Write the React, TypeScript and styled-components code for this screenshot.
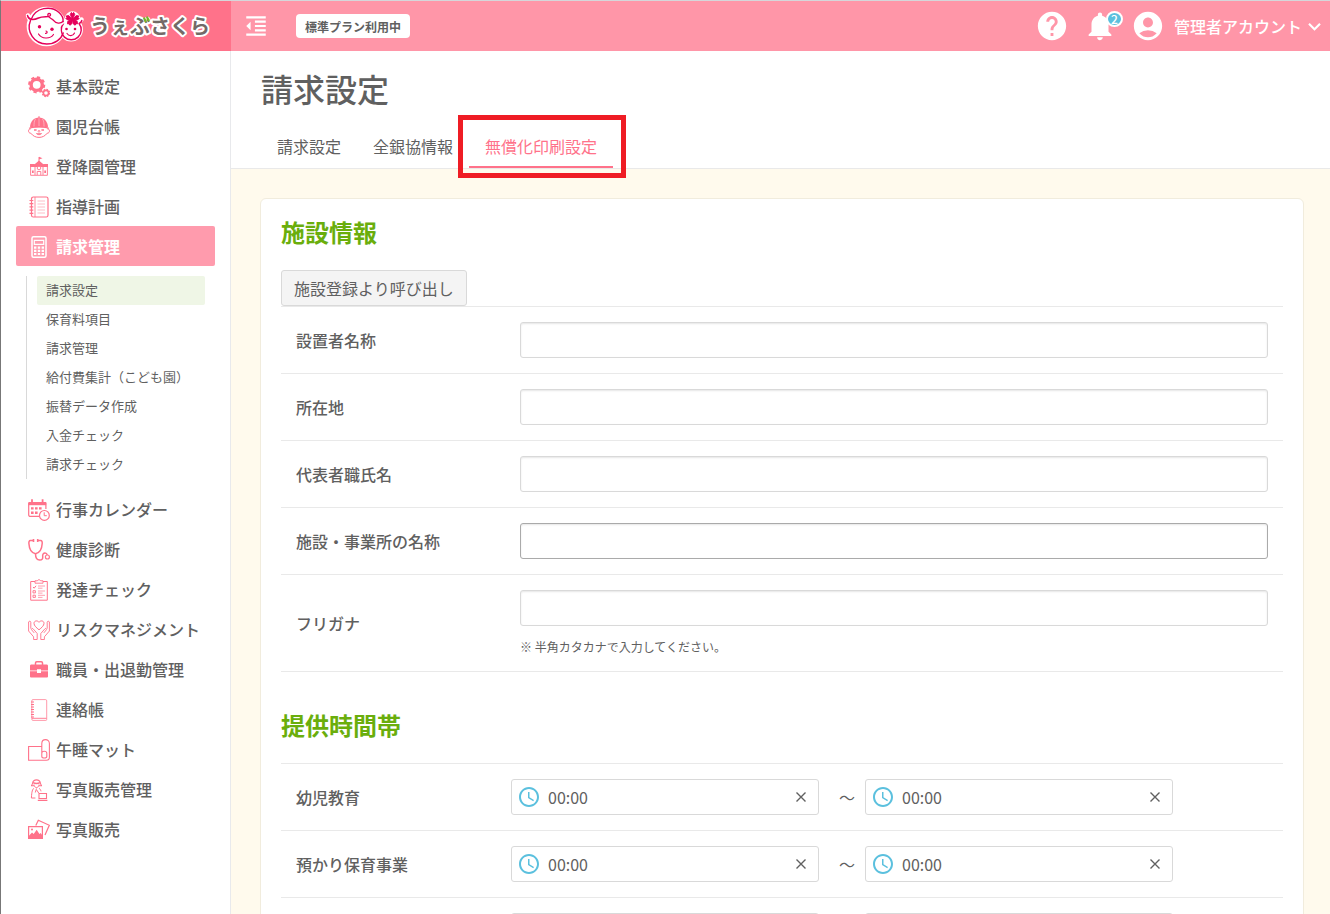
import React from "react";
import styled, { createGlobalStyle, css } from "styled-components";
import {
  MdAccessTime,
  MdAccountCircle,
  MdFormatIndentDecrease,
  MdHelp,
  MdKeyboardArrowDown,
  MdNotifications,
} from "react-icons/md";

const color = {
  brand: "#ff728a",
  bar: "#ff96a8",
  active: "#ff9bad",
  text: "#606060",
  green: "#6aae0c",
  line: "#e9e9e9",
  cream: "#fffaed",
  blue: "#5bc0de",
};

const GlobalStyle = createGlobalStyle`
  *, *::before, *::after { box-sizing: border-box; }
  body {
    margin: 0;
    background: #fff;
    color: ${color.text};
    font-family: "Noto Sans CJK JP", sans-serif;
    font-size: 16px;
    line-height: 24px;
  }
  button, input { font: inherit; color: inherit; }
  a { color: inherit; text-decoration: none; }
  h1, h2, ul { margin: 0; padding: 0; }
  ul { list-style: none; }
`;

const Page = styled.div`
  display: grid;
  grid-template: 50px minmax(0, 1fr) / 230px minmax(0, 1fr);
  height: 100vh;
  overflow: hidden;
  border-top: 1px solid #d6d6da;
  border-left: 1px solid #777;
`;

const Brand = styled.a`
  display: block;
  height: 50px;
  background: ${color.brand};
`;

const TopBar = styled.header`
  display: flex;
  align-items: center;
  justify-content: space-between;
  padding: 0 3px 0 12px;
  background: ${color.bar};
  color: #fff;
`;

const BarGroup = styled.div<{ $gap: number }>`
  display: flex;
  align-items: center;
  gap: ${(p) => p.$gap}px;
`;

const BarButton = styled.button`
  display: flex;
  align-items: center;
  position: relative;
  padding: 0;
  border: 0;
  background: none;
  color: #fff;
  font-weight: 500;
  cursor: pointer;
`;

const AccountName = styled.span`
  padding-left: 9px;
`;

const PlanTag = styled.span`
  padding: 2px 9px 0;
  border-radius: 4px;
  background: #fff;
  color: ${color.text};
  font-size: 12px;
  font-weight: 700;
  line-height: 22px;
`;

const Count = styled.span`
  position: absolute;
  top: 2px;
  right: -6px;
  width: 17px;
  height: 16px;
  border: 2px solid #fff;
  border-radius: 50%;
  background: ${color.blue};
  font-size: 12px;
  line-height: 11px;
  text-align: center;
`;

const Sidebar = styled.nav`
  padding: 15px;
  border-right: 1px solid #e8e9ec;
  background: #fff;
  overflow: hidden;
`;

const NavLink = styled.a<{ $active?: boolean }>`
  display: flex;
  align-items: center;
  gap: 6px;
  height: 40px;
  padding-left: 12px;
  border-radius: 2px;
  font-weight: 500;
  white-space: nowrap;
  svg { flex: none; color: ${color.brand}; }
  ${(p) =>
    p.$active &&
    css`
      background: ${color.active};
      color: #fff;
      font-weight: 700;
      svg { color: #fff; }
    `}
`;

const SubMenu = styled.ul`
  margin: 10px;
  padding-left: 10px;
  border-left: 1px solid #d9d9d9;
`;

const SubLink = styled.a<{ $active?: boolean }>`
  display: block;
  padding: 0 0 2px 9px;
  border-radius: 2px;
  background: ${(p) => (p.$active ? "#eff6e6" : "transparent")};
  font-size: 13px;
  line-height: 27px;
  white-space: nowrap;
`;

const Main = styled.main`
  display: flex;
  flex-direction: column;
  overflow: auto;
  scrollbar-width: none;
  background: ${color.cream};
`;

const PageHead = styled.div`
  padding: 17px 30px 0;
  border-bottom: 1px solid ${color.line};
  background: #fff;
`;

const Title = styled.h1`
  margin-bottom: 18px;
  font-size: 32px;
  font-weight: 500;
  line-height: 40px;
`;

const Tabs = styled.div`
  display: flex;
`;

const Tab = styled.a<{ $active?: boolean }>`
  position: relative;
  padding: 8px 16px;
  border-bottom: 2px solid ${(p) => (p.$active ? color.brand : "transparent")};
  color: ${(p) => (p.$active ? color.brand : "inherit")};
`;

const Highlight = styled.span`
  position: absolute;
  inset: -11px -13px -12px -11px;
  border: 5px solid #ef1c24;
  pointer-events: none;
`;

const Card = styled.form`
  margin: 29px 26px 29px 29px;
  padding: 19px 20px;
  border: 1px solid #f1ecdd;
  border-radius: 6px;
  background: #fff;
`;

const Section = styled.section`
  & + & { margin-top: 39px; }
`;

const SectionTitle = styled.h2`
  margin-bottom: 24px;
  color: ${color.green};
  font-size: 24px;
  font-weight: 700;
  line-height: 28px;
`;

const RecallButton = styled.button`
  display: block;
  height: 36px;
  padding: 0 12px;
  border: 1px solid #d9d9d9;
  border-radius: 3px;
  background: #f4f4f4;
`;

const Rows = styled.div`
  border-bottom: 1px solid ${color.line};
`;

const Row = styled.div<{ $label: number }>`
  display: grid;
  grid-template-columns: ${(p) => p.$label}px minmax(0, 1fr);
  align-items: center;
  padding: 15px;
  border-top: 1px solid ${color.line};
`;

const Label = styled.label`
  font-weight: 500;
`;

const TextInput = styled.input<{ $strong?: boolean }>`
  display: block;
  width: 100%;
  height: 36px;
  padding: 0 12px;
  border: 1px solid ${(p) => (p.$strong ? "#aaa" : "#d9d9d9")};
  border-radius: 3px;
  box-shadow: inset 0 1px 2px rgba(0, 0, 0, 0.1);
  outline: 0;
`;

const Hint = styled.p`
  margin: 12px 0 0;
  font-size: 12px;
  line-height: 18px;
`;

const TimeRange = styled.div`
  display: flex;
  align-items: center;
`;

const Tilde = styled.span`
  padding: 0 10px 0 20px;
`;

const TimeBox = styled.div`
  display: flex;
  align-items: center;
  flex: 0 1 308px;
  height: 36px;
  padding: 0 12px 0 5px;
  border: 1px solid #d9d9d9;
  border-radius: 3px;
  svg { flex: none; }
`;

const TimeInput = styled.input`
  flex: 1;
  min-width: 0;
  height: 24px;
  padding: 0 0 0 7px;
  border: 0;
  outline: 0;
  background: none;
`;

const ClearButton = styled.button`
  display: flex;
  padding: 0;
  border: 0;
  background: none;
`;

const Icon = ({ children }: { children: React.ReactNode }) => (
  <svg width="22" height="24" viewBox="0 -2 22 24" fill="none" stroke="currentColor" strokeWidth="1.2" aria-hidden="true">
    {children}
  </svg>
);

const icons = {
  gears: (
    <Icon>
      <circle cx="8.7" cy="8.8" r="5.6" strokeWidth="3.4" />
      <circle cx="8.7" cy="8.8" r="7.6" strokeWidth="2" strokeDasharray="3.2 2.77" />
      <circle cx="18" cy="17" r="2.6" strokeWidth="1.6" />
      <circle cx="18" cy="17" r="3.6" strokeWidth="1.2" strokeDasharray="1.6 1.23" />
    </Icon>
  ),
  child: (
    <Icon>
      <path d="M2 11.5C2 5.5 6 1.5 11 1.5s9 4 9 10z" fill="currentColor" stroke="none" />
      <path d="M11 2v9M7.500 3C6 5 6 8 6 11M14.500 3C16 5 16 8 16 11" stroke="#fff" strokeWidth=".5" opacity=".8" />
      <path d="M11 .3v2M1 12.2c6-2 14-2 20 0" />
      <path d="M2.800 12.800c-3-.4-3 4.600 0 4.400C5 20.200 8 21.400 11 21.400s6-1.200 8.200-4.200c3 .2 3-4.800 0-4.400" strokeWidth="1" />
      <path d="M6 14h2.600M13.400 14H16" strokeWidth="1.500" />
      <circle cx="11" cy="15.300" r=".9" strokeWidth=".8" />
      <path d="M8.300 17.500c1.200 1.700 4.200 1.700 5.400 0z" fill="currentColor" strokeWidth=".6" />
    </Icon>
  ),
  school: (
    <Icon>
      <path d="M11 1v5" strokeWidth="1" />
      <path d="M11 .8l3.500 1.400L11 3.600zM11 4.500l5.500 4.700V11h-11V9.200z" fill="currentColor" stroke="none" />
      <path d="M2 8h5l-1 3H2zM15 8h5v3h-4z" fill="currentColor" stroke="none" />
      <path d="M2.600 11v8.300h16.800V11M7 11v8M15 11v8" strokeWidth=".9" />
      <circle cx="11" cy="12" r="1.800" fill="#fff" strokeWidth=".9" />
      <path d="M9.200 19v-3.500h3.600V19" strokeWidth=".9" />
      <path d="M4 14.500h1.700v2.500H4zM16.300 14.500H18v2.500h-1.700z" fill="currentColor" stroke="none" />
    </Icon>
  ),
  notebook: (
    <Icon>
      <rect x="3.500" y="1" width="16.500" height="20" rx="1.800" />
      <path d="M7 1v20" strokeWidth=".8" />
      <path d="M1.500 4.500h3.800M1.500 7.700h3.800M1.500 10.900h3.800M1.500 14.100h3.800M1.500 17.300h3.800" strokeWidth="1.200" />
      <path d="M9.500 5H17M9.500 8H17M9.500 11H17M9.500 14H17M9.500 17H17" strokeWidth=".8" opacity=".6" />
    </Icon>
  ),
  calculator: (
    <Icon>
      <rect x="4" y=".8" width="14" height="20.400" rx="1.500" strokeWidth="1.500" />
      <path d="M6.300 4.300h9.400v4H6.300z" />
      <path
        d="M6 10.500h2.400v2.200H6zM9.800 10.500h2.400v2.200H9.800zM13.600 10.500H16v2.200h-2.400zM6 13.700h2.400v2.200H6zM9.800 13.700h2.400v2.200H9.800zM13.600 13.700H16v2.200h-2.400zM6 16.900h2.400V19H6zM9.800 16.900h2.400V19H9.800zM13.600 16.900H16V19h-2.400z"
        fill="currentColor"
        stroke="none"
      />
    </Icon>
  ),
  calendar: (
    <Icon>
      <path d="M11 17.400H2.200a1.500 1.500 0 0 1-1.500-1.500V4.300h17.200V10" />
      <path d="M.5 3h17.700v3.200H.5z" fill="currentColor" stroke="none" />
      <path d="M4 .3v3.600M14.600 .3v3.600" strokeWidth="1.800" />
      <path d="M3 8.200h2.600v2.300H3zM7 8.200h2.600v2.300H7zM11 8.200h2.600v2.300H11zM3 12.600h2.600v2.300H3zM7 12.600h2.600v2.300H7z" fill="currentColor" stroke="none" />
      <circle cx="16.400" cy="16.400" r="4.900" fill="#fff" />
      <path d="M16.200 13.300v3.400h2.600" strokeWidth="1" />
    </Icon>
  ),
  stethoscope: (
    <Icon>
      <path d="M5.200 1.500H2.400C1 1.500 .8 3 .9 4.500c.3 5 2.600 9.500 6.600 10.300 4-.8 6.400-5.300 6.700-10.300 .1-1.500-.1-3-1.500-3H10" strokeWidth="1.500" />
      <path d="M5.500 0v3M9.700 0v3" strokeWidth="1.600" />
      <path d="M7.500 14.800c0 4.200 1.600 6.300 4.200 6.300 2.500 0 3.300-1.500 3-3.500-.4-2.400.9-3.700 2.300-3.700 1.300 0 2 .8 2.300 2" strokeWidth="1.500" />
      <circle cx="19.400" cy="18" r="2" strokeWidth="1.200" />
    </Icon>
  ),
  checklist: (
    <Icon>
      <path d="M7 2.500H2.700v18.700h16.600V2.500H15" strokeWidth="1" />
      <path d="M7 1.800h2.400C10 .3 12 .3 12.600 1.800H15v2.400H7z" strokeWidth=".9" />
      <path d="M5 8l1.200 1.200L8 6.800" strokeWidth="1" />
      <path d="M5 11.700h2.400v2.200H5zM5 16.200h2.400v2.200H5z" strokeWidth=".9" />
      <path d="M10 7h7M10 9.200h4.500M10 12h7M10 14.100h4.500M10 16.300h7M10 18.400h4.500" strokeWidth=".9" opacity=".75" />
    </Icon>
  ),
  careHands: (
    <Icon>
      <path d="M11 10.800C8.500 8.700 6 6.800 6 4.300 6 1.700 9.500 1 11 3.300 12.500 1 16 1.700 16 4.300c0 2.500-2.500 4.400-5 6.500z" strokeWidth="1" />
      <path d="M.6 3v9l5 5.800v2.700h3.600v-6L5 9.700c-.8-.7-2 .2-1.300 1.200l2.500 3M.6 3.200c0-1.300 2.200-1.300 2.200 0v6.500" strokeWidth=".9" />
      <path d="M21.400 3v9l-5 5.800v2.700h-3.600v-6L17 9.700c.8-.7 2 .2 1.300 1.200l-2.500 3M21.400 3.200c0-1.300-2.200-1.300-2.200 0v6.500" strokeWidth=".9" />
    </Icon>
  ),
  briefcase: (
    <Icon>
      <path d="M7.500 6V4c0-.8.400-1.200 1.200-1.200h4.600c.8 0 1.200.4 1.200 1.200v2" strokeWidth="1.500" />
      <path d="M3.500 5.500h15c1 0 1.500.5 1.500 1.500v4.500h-7v-1.300H9v1.300H2V7c0-1 .5-1.500 1.500-1.500zM2 12.200h7v1.700h4v-1.700h7v5c0 1-.5 1.300-1.500 1.300h-15c-1 0-1.500-.3-1.500-1.300z" fill="currentColor" stroke="none" />
    </Icon>
  ),
  contactBook: (
    <Icon>
      <path d="M5 .6h12.500c.8 0 1.200.4 1.200 1.200v18.700c0 .6-.3.900-.9.900H5c-.8 0-1.200-.4-1.200-1.200V1.800C3.800 1 4.200.6 5 .6z" strokeWidth=".9" opacity=".8" />
      <path d="M4 19.300h14.500" strokeWidth=".9" />
      <path d="M3 3h3M3 5.500h3M3 8h3M3 10.500h3M3 13h3M3 15.500h3M3 18h3" strokeWidth="1.200" />
    </Icon>
  ),
  mat: (
    <Icon>
      <path d="M13.500 7.500H.6v13.800h17.800c2 0 3-1.600 3-3.300V4.500c0-5.200-7.600-5.200-7.600 0V17.500c0 2 5 2 5 0v-3.300c0-2.700-5-2.700-5 0" strokeWidth="1.100" />
    </Icon>
  ),
  photographer: (
    <Icon>
      <path d="M3 6.500c1 0 1.400-1 1.600-2.500C5.400-.2 11.600-.2 12.400 4c.2 1.500.6 2.500 1.600 2.500M3 6.700h3M11 6.700h3" strokeWidth="1.100" />
      <path d="M5 3.600c2 1 5 1 7 0" strokeWidth="1.500" />
      <path d="M6 5.500c0 4 5 4 5 0M6 9.300c-1.500.8-2.300 3-2.600 9.700h4M11 9.300c1 .5 1.700 1.500 2 3M8.500 9.500l-1.200 4M8.700 11l2 3" strokeWidth="1" />
      <path d="M11 14.500h7.500v5H11zM9.800 21.400h9.600" strokeWidth="1.100" />
    </Icon>
  ),
  photos: (
    <Icon>
      <path d="M7.800 6.500l2.500-5.200 11 5L17 16" strokeWidth="1.200" />
      <path d="M.6 7.600h13.800v11.800H.6z" strokeWidth="1.200" />
      <path d="M1 16.700l3-3.300 1.700 1.600 3-4.300 2.700 4.300 1.200-1 1.500 2v3.500H1z" fill="currentColor" stroke="none" />
      <circle cx="4" cy="10.500" r="1" fill="currentColor" stroke="none" />
    </Icon>
  ),
};

const Logo = () => (
  <svg width="230" height="50" viewBox="1 1 230 50" role="img" aria-label="うぇぶさくら">
    <g fill="#fff" stroke="#fff" strokeWidth="4.500" strokeLinejoin="round" strokeLinecap="round">
      <circle cx="71" cy="29.500" r="9.700" />
      <circle cx="46.500" cy="26.500" r="17.600" />
      <path d="M28 15.500c1 3.500 3 5 6 4.500M79 21l2.500-1.500" />
      <circle cx="72.500" cy="19" r="5.500" />
    </g>
    <g fill="none" stroke="#e5005a" strokeWidth="1.400" strokeLinecap="round" strokeLinejoin="round">
      <path d="M63.500 23.500a10 10 0 1 0 15.500 0c1.700-.5 2.500-1.500 2.800-3" />
      <path d="M31.500 19.500C36 7.500 52 5.500 59.500 13c2.800 2.800 4.300 6 4.600 10-.8 1.800-3 2.200-5 1.600 4.300 10-2.500 19.700-12.600 19.700-10.500 0-18.800-9.800-17-20.300z" fill="#fff" stroke="none" />
      <path d="M27.500 15.500c1 4.500 5.500 5 11 2.500 5-2.300 11.800 0 12-3 0-2.300-3-2.100-2.600.4.600 2.700 4.100 3 5.600 5 2.500 3.300 7 3.500 9.500 1.100" />
      <path d="M31.200 19.500C35.500 7.300 51 5.200 59 12.500c3 2.700 4.600 6 4 9M30.500 20.500c-4.500 11 3.500 23.500 16.300 23.500 8 0 14.500-4.800 16.400-11" />
      <path d="M46 31c1.700.5 1.500 2.500-.5 2.300M38.500 34c3 5 11.500 5.500 15 .5M67 33.500c2 3 6 2.800 7.500-.5" strokeWidth="1.200" />
    </g>
    <g fill="#e5005a">
      <circle cx="39.500" cy="26.800" r="1.700" />
      <circle cx="52" cy="29.300" r="1.700" />
      <circle cx="66.500" cy="29" r="1.300" />
      <circle cx="75" cy="29" r="1.300" />
      <path d="M72.500 19L70.300 14.500 71.300 12.500 72.500 13.600 73.700 12.500 74.700 14.500zM72.500 19L76.400 15.600 78.800 16 78.100 17.400 79.200 18.600 77 20zM72.500 19L77.200 21.300 77.400 23.900 75.900 23.700 75.100 25.200 73.200 23.800zM72.500 19L67.800 21.300 67.600 23.900 69.100 23.700 69.900 25.200 71.800 23.800zM72.500 19L68.600 15.600 66.200 16 66.900 17.400 65.800 18.600 68 20z" stroke="#e5005a" strokeWidth="1" strokeLinejoin="round" />
    </g>
    <text
      x="90"
      y="34"
      fontFamily="'Noto Sans CJK JP', sans-serif"
      fontSize="20"
      fontWeight="700"
      fill="#736a67"
      stroke="#fff"
      strokeWidth="4"
      strokeLinejoin="round"
      paintOrder="stroke"
    >
      うぇぶさくら
    </text>
    <path d="M144.200 18.500l1.500 2.700M147.200 17.500l1.500 2.700" stroke="#72b626" strokeWidth="2.200" strokeLinecap="round" />
  </svg>
);

type NavEntry = { icon: keyof typeof icons; label: string; active?: boolean; sub?: string[] };

const nav: NavEntry[] = [
  { icon: "gears", label: "基本設定" },
  { icon: "child", label: "園児台帳" },
  { icon: "school", label: "登降園管理" },
  { icon: "notebook", label: "指導計画" },
  {
    icon: "calculator",
    label: "請求管理",
    active: true,
    sub: ["請求設定", "保育料項目", "請求管理", "給付費集計（こども園）", "振替データ作成", "入金チェック", "請求チェック"],
  },
  { icon: "calendar", label: "行事カレンダー" },
  { icon: "stethoscope", label: "健康診断" },
  { icon: "checklist", label: "発達チェック" },
  { icon: "careHands", label: "リスクマネジメント" },
  { icon: "briefcase", label: "職員・出退勤管理" },
  { icon: "contactBook", label: "連絡帳" },
  { icon: "mat", label: "午睡マット" },
  { icon: "photographer", label: "写真販売管理" },
  { icon: "photos", label: "写真販売" },
];

const facilityFields = [
  { id: "founder", label: "設置者名称" },
  { id: "address", label: "所在地" },
  { id: "representative", label: "代表者職氏名" },
  { id: "facility", label: "施設・事業所の名称", strong: true },
  { id: "kana", label: "フリガナ", hint: "※ 半角カタカナで入力してください。" },
];

const timeFields = [
  { id: "education", label: "幼児教育" },
  { id: "daycare", label: "預かり保育事業" },
  { id: "other", label: "" },
];

const TimeField = ({ id, name }: { id: string; name?: string }) => (
  <TimeBox>
    <MdAccessTime size={24} color={color.blue} />
    <TimeInput id={id} aria-label={name} defaultValue="00:00" />
    <ClearButton type="button" aria-label="クリア">
      <svg width="10" height="10" viewBox="0 0 10 10" stroke="currentColor" strokeWidth="1.400">
        <path d="M.5 .5l9 9M9.500 .5l-9 9" />
      </svg>
    </ClearButton>
  </TimeBox>
);

export default function App() {
  return (
    <>
      <GlobalStyle />
      <Page>
        <Brand href="#">
          <Logo />
        </Brand>
        <TopBar>
          <BarGroup $gap={27}>
            <BarButton aria-label="メニュー">
              <MdFormatIndentDecrease size={26} />
            </BarButton>
            <PlanTag>標準プラン利用中</PlanTag>
          </BarGroup>
          <BarGroup $gap={14}>
            <BarButton aria-label="ヘルプ">
              <MdHelp size={34} />
            </BarButton>
            <BarButton aria-label="お知らせ">
              <MdNotifications size={34} />
              <Count>2</Count>
            </BarButton>
            <BarButton>
              <MdAccountCircle size={34} />
              <AccountName>管理者アカウント</AccountName>
              <MdKeyboardArrowDown size={25} />
            </BarButton>
          </BarGroup>
        </TopBar>
        <Sidebar>
          <ul>
            {nav.map((item) => (
              <li key={item.label}>
                <NavLink href="#" $active={item.active}>
                  {icons[item.icon]}
                  {item.label}
                </NavLink>
                {item.sub && (
                  <SubMenu>
                    {item.sub.map((label, i) => (
                      <li key={label}>
                        <SubLink href="#" $active={i === 0}>
                          {label}
                        </SubLink>
                      </li>
                    ))}
                  </SubMenu>
                )}
              </li>
            ))}
          </ul>
        </Sidebar>
        <Main>
          <PageHead>
            <Title>請求設定</Title>
            <Tabs>
              <Tab href="#">請求設定</Tab>
              <Tab href="#">全銀協情報</Tab>
              <Tab href="#" $active>
                無償化印刷設定
                <Highlight />
              </Tab>
            </Tabs>
          </PageHead>
          <Card>
            <Section>
              <SectionTitle>施設情報</SectionTitle>
              <RecallButton type="button">施設登録より呼び出し</RecallButton>
              <Rows>
                {facilityFields.map((f) => (
                  <Row key={f.id} $label={224}>
                    <Label htmlFor={f.id}>{f.label}</Label>
                    <div>
                      <TextInput id={f.id} $strong={f.strong} />
                      {f.hint && <Hint>{f.hint}</Hint>}
                    </div>
                  </Row>
                ))}
              </Rows>
            </Section>
            <Section>
              <SectionTitle>提供時間帯</SectionTitle>
              <Rows>
                {timeFields.map((f) => (
                  <Row key={f.id} $label={215}>
                    <Label htmlFor={f.id}>{f.label}</Label>
                    <TimeRange>
                      <TimeField id={f.id} />
                      <Tilde>～</Tilde>
                      <TimeField id={f.id + "-end"} name="終了時刻" />
                    </TimeRange>
                  </Row>
                ))}
              </Rows>
            </Section>
          </Card>
        </Main>
      </Page>
    </>
  );
}
